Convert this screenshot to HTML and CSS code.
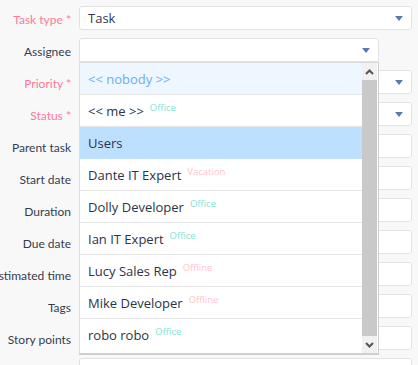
FILE: index.html
```html
<!DOCTYPE html>
<html lang="en">
<head>
    <meta charset="UTF-8" />
    <title>Task form</title>
    <link rel="stylesheet" href="styles.css">
</head>
<body>
    <div class="form">
        <div class="row">
            <label class="lbl req">Task type *</label>
            <div class="field wide">Task<span class="caret"></span></div>
        </div>
        <div class="row">
            <label class="lbl">Assignee</label>
            <div class="field narrow"><span class="caret"></span>
                <div class="dropdown">
                    <div class="list">
                        <div class="opt nobody">&lt;&lt; nobody &gt;&gt;</div>
                        <div class="opt">&lt;&lt; me &gt;&gt;<sup class="st office">Office</sup></div>
                        <div class="opt group">Users</div>
                        <div class="opt">Dante IT Expert<sup class="st away">Vacation</sup></div>
                        <div class="opt">Dolly Developer<sup class="st office">Office</sup></div>
                        <div class="opt">Ian IT Expert<sup class="st office">Office</sup></div>
                        <div class="opt">Lucy Sales Rep<sup class="st away">Offline</sup></div>
                        <div class="opt">Mike Developer<sup class="st away">Offline</sup></div>
                        <div class="opt last">robo robo<sup class="st office">Office</sup></div>
                    </div>
                    <div class="scroll">
                        <div class="sbtn">
                            <svg width="9" height="6" viewBox="0 0 9 6"><path d="M1 5 L4.5 1.5 L8 5" fill="none" stroke="#555" stroke-width="2"/></svg>
                        </div>
                        <div class="thumb"></div>
                        <div class="sbtn">
                            <svg width="9" height="6" viewBox="0 0 9 6"><path d="M1 1 L4.5 4.5 L8 1" fill="none" stroke="#555" stroke-width="2"/></svg>
                        </div>
                    </div>
                </div>
            </div>
        </div>
        <div class="row">
            <label class="lbl req">Priority *</label>
            <div class="field wide"><span class="caret"></span></div>
        </div>
        <div class="row">
            <label class="lbl req">Status *</label>
            <div class="field wide"><span class="caret"></span></div>
        </div>
        <div class="row">
            <label class="lbl">Parent task</label>
            <div class="field wide"></div>
        </div>
        <div class="row">
            <label class="lbl">Start date</label>
            <div class="field wide"></div>
        </div>
        <div class="row">
            <label class="lbl">Duration</label>
            <div class="field wide"></div>
        </div>
        <div class="row">
            <label class="lbl">Due date</label>
            <div class="field wide"></div>
        </div>
        <div class="row">
            <label class="lbl">Estimated time</label>
            <div class="field wide"></div>
        </div>
        <div class="row">
            <label class="lbl">Tags</label>
            <div class="field wide"></div>
        </div>
        <div class="row">
            <label class="lbl">Story points</label>
            <div class="field wide"></div>
        </div>
        <div class="row">
            <label class="lbl"></label>
            <div class="field wide"></div>
        </div>
    </div>
</body>
</html>
```

FILE: styles.css
```css
body {
    margin: 0;
    background-color: #f8f8f8;
    font-family: "Open Sans", "Noto Sans", sans-serif;
    color: #2f3a4f;
    overflow: hidden;
}

.form {
    display: flex;
    flex-direction: column;
    gap: 8px;
    padding-top: 6px;
}

.row {
    display: flex;
    align-items: center;
    gap: 8px;
    height: 24px;
}

.lbl {
    width: 71px;
    flex: none;
    display: flex;
    justify-content: flex-end;
    padding-top: 3px;
    white-space: nowrap;
    font-family: Lato, "Open Sans", sans-serif;
    font-size: 12px;
    color: #333d50;
}

.lbl.req {
    color: #ff7896;
}

.field {
    position: relative;
    box-sizing: border-box;
    height: 24px;
    background: #fff;
    border: 1px solid #e2e2e2;
    border-radius: 3px;
    padding-left: 8px;
    font-size: 13px;
    line-height: 22px;
}

.field.wide {
    width: 333px;
}

.field.narrow {
    width: 300px;
    border-bottom-left-radius: 0;
    border-bottom-right-radius: 0;
}

.caret {
    position: absolute;
    right: 8px;
    top: 9px;
    border-left: 4px solid transparent;
    border-right: 4px solid transparent;
    border-top: 5px solid #5b78b4;
}

.dropdown {
    position: absolute;
    z-index: 5;
    left: -1px;
    top: 23px;
    width: 300px;
    height: 293px;
    box-sizing: border-box;
    display: flex;
    background: #fff;
    border: 1px solid #dcdcdc;
    border-right-color: #cfcfcf;
    border-bottom: 2px solid #cfcfcf;
}

.list {
    flex: 1;
    display: flex;
    flex-direction: column;
}

.opt {
    height: 31px;
    border-bottom: 1px solid #e6e6e6;
    padding-left: 8px;
    font-size: 13px;
    line-height: 33px;
    color: #2a344a;
    white-space: nowrap;
}

.opt.last {
    border-bottom: none;
}

.opt.nobody {
    background: #eef6ff;
    color: #6cafec;
}

.opt.group {
    background: #bde0fe;
    border-bottom: none;
    height: 32px;
}

.st {
    font-size: 9.5px;
    margin-left: 6px;
    vertical-align: 5px;
    line-height: 0;
}

.st.office {
    color: #86e3d3;
}

.st.away {
    color: #ffc4cf;
}

.scroll {
    width: 15px;
    flex: none;
    display: flex;
    flex-direction: column;
    background: #f1f1f1;
    margin-right: 1px;
}

.sbtn {
    height: 17px;
    display: flex;
    align-items: center;
    justify-content: center;
}

.thumb {
    flex: 1;
    background: #c9c9c9;
}
```
